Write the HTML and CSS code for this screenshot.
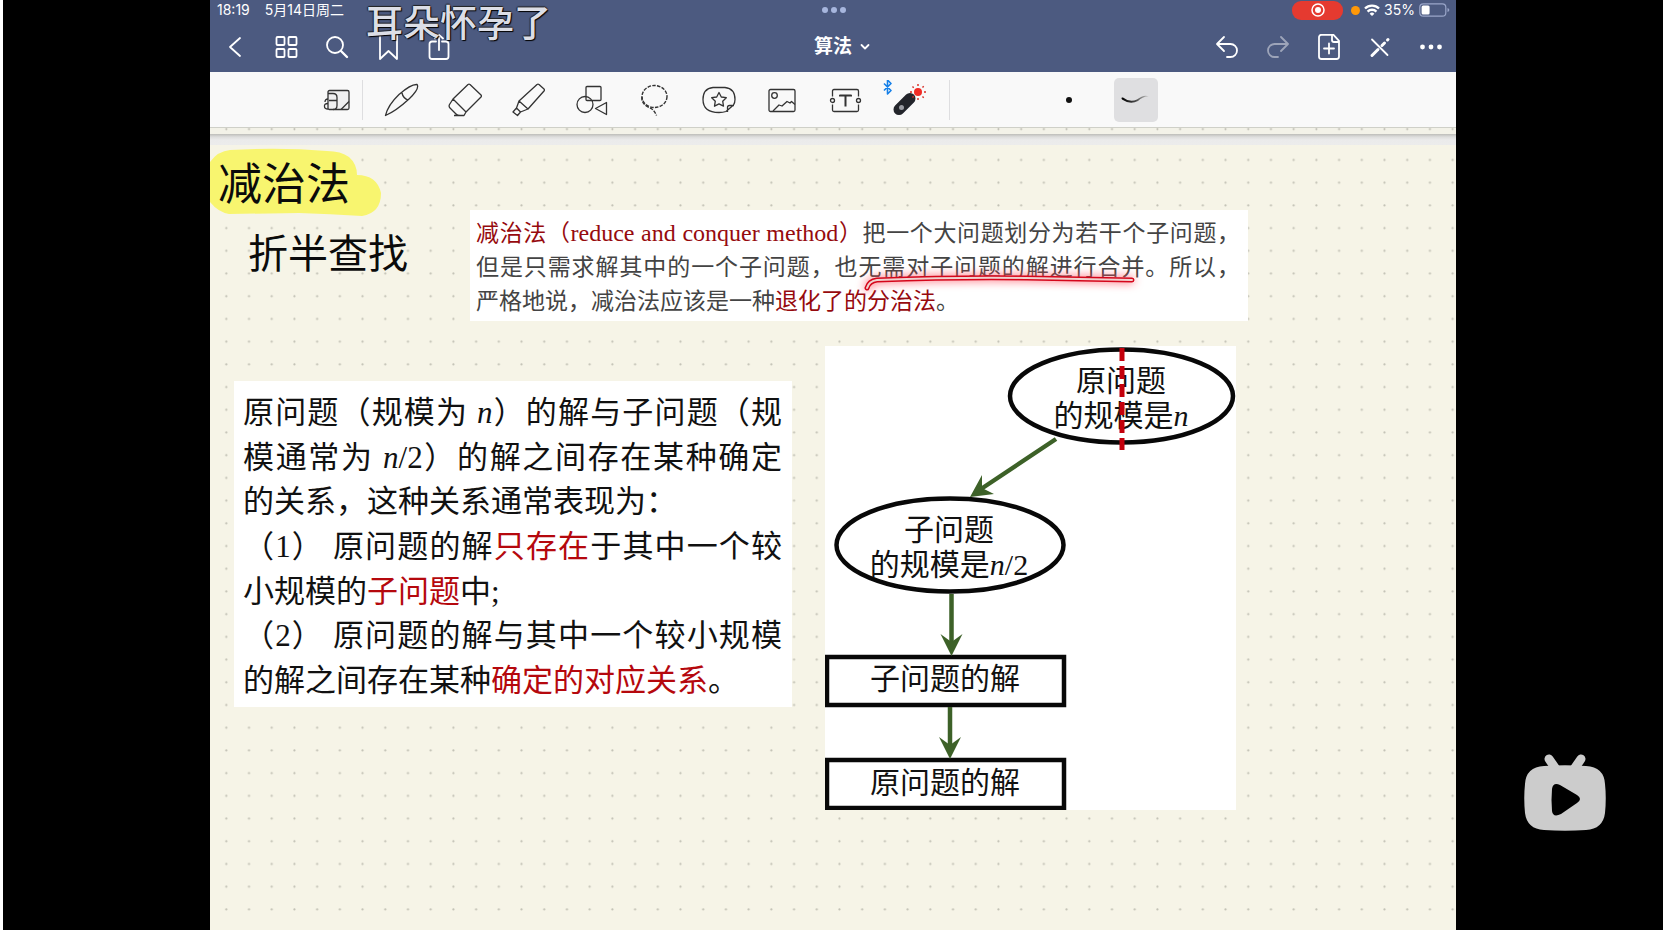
FILE: index.html
```html
<!DOCTYPE html>
<html lang="zh-CN">
<head>
<meta charset="utf-8">
<meta name="viewport" content="width=device-width, initial-scale=1">
<title>算法</title>
<link rel="stylesheet" href="styles.css">
</head>
<body>
<div class="stage">
  <main class="app">
    <header class="topbar">
      <div class="status">
        <div class="status-left"><span>18:19</span><span>5月14日周二</span></div>
        <div class="multitask"><i></i><i></i><i></i></div>
        <div class="status-right">
          <span class="record"><svg width="14" height="14" viewBox="0 0 14 14"><circle cx="7" cy="7" r="6" fill="none" stroke="#fff" stroke-width="1.5"/><circle cx="7" cy="7" r="3" fill="#fff"/></svg></span>
          <span class="mic"></span>
          <svg width="16" height="12" viewBox="0 0 16 12" fill="none" stroke="#fff" stroke-width="2.400"><path d="M1 4.500a10 10 0 0 1 14 0M3.600 7.600a6.200 6.200 0 0 1 8.800 0"/><path d="M8 12L5.600 9.800a3.400 3.400 0 0 1 4.800 0z" fill="#fff" stroke="none"/></svg>
          <span class="percent">35%</span>
          <svg width="31" height="14" viewBox="0 0 31 14"><rect x=".8" y=".8" width="26" height="12.4" rx="3.5" fill="none" stroke="#9aa6c9" stroke-width="1.2"/><rect x="2.6" y="2.6" width="8" height="8.8" rx="1.5" fill="#fff"/><path d="M28.5 5v4q1.8-.6 1.8-2t-1.8-2z" fill="#9aa6c9"/></svg>
        </div>
      </div>
      <nav class="nav">
        <div class="nav-group">
          <button class="nav-btn" aria-label="返回"><svg width="26" height="26" viewBox="0 0 26 26"><path d="M17 4L7 13l10 9"/></svg></button>
          <button class="nav-btn" aria-label="缩略图"><svg width="26" height="26" viewBox="0 0 26 26"><rect x="2.500" y="3" width="8" height="8" rx="1"/><rect x="14.500" y="3" width="8" height="8" rx="1"/><rect x="2.500" y="15" width="8" height="8" rx="1"/><rect x="14.500" y="15" width="8" height="8" rx="1"/></svg></button>
          <button class="nav-btn" aria-label="搜索"><svg width="26" height="26" viewBox="0 0 26 26"><circle cx="10" cy="11" r="8"/><path d="M16 17l6 6" stroke-width="2.4"/></svg></button>
          <button class="nav-btn" aria-label="书签"><svg width="26" height="26" viewBox="0 0 26 26"><path d="M4 0v25l8.500-8 8.500 8V0z"/></svg></button>
          <button class="nav-btn" aria-label="分享"><svg width="26" height="26" viewBox="0 0 26 26"><path d="M9 7.500H5a2.500 2.500 0 0 0-2.500 2.500v12.500A2.500 2.500 0 0 0 5 25h14a2.500 2.500 0 0 0 2.500-2.500V10A2.500 2.500 0 0 0 19 7.500h-4M12 16V1M8 4.500L12 .8l4 3.700"/></svg></button>
        </div>
        <button class="title">算法<svg width="10" height="8" viewBox="0 0 10 8"><path d="M1.500 2L5 5.500 8.500 2"/></svg></button>
        <div class="nav-group nav-end">
          <button class="nav-btn" aria-label="撤销"><svg width="26" height="26" viewBox="0 0 26 26"><path d="M10 3L3 10l7 7M3.500 10h13a6.500 6.500 0 0 1 0 13H13"/></svg></button>
          <button class="nav-btn faded" aria-label="重做"><svg width="26" height="26" viewBox="0 0 26 26"><path d="M16 3l7 7-7 7M22.500 10h-13a6.500 6.500 0 0 0 0 13H13"/></svg></button>
          <button class="nav-btn" aria-label="添加页面"><svg width="26" height="26" viewBox="0 0 26 26"><path d="M5.500 0.800h12l5.500 6V22.500a2.500 2.500 0 0 1-2.500 2.500h-15A2.500 2.500 0 0 1 3 22.500v-19A2.500 2.500 0 0 1 5.500.8zM16 1v5a2 2 0 0 0 2 2h5M13 9.500v10M8 14.500h10"/></svg></button>
          <button class="nav-btn" aria-label="只读模式"><svg width="26" height="26" viewBox="0 0 26 26"><path d="M5 5.500l15.500 15.500"/><path d="M5 21.500l6-6" stroke-width="3"/><path d="M15 11.500l2.500-2.500M20.500 6l.5-.5" stroke-width="3"/></svg></button>
          <button class="nav-btn" aria-label="更多"><svg width="26" height="26" viewBox="0 0 26 26"><g fill="#fff" stroke="none"><circle cx="4.500" cy="13" r="2.400"/><circle cx="13" cy="13" r="2.400"/><circle cx="21.500" cy="13" r="2.400"/></g></svg></button>
        </div>
      </nav>
      <p class="bullet">耳朵怀孕了</p>
    </header>

    <div class="toolbar">
      <button class="tool panel-toggle" aria-label="工具面板"><svg width="28" height="24" viewBox="0 0 28 24"><rect x="5" y="2.500" width="21" height="19" rx="1.500" fill="#efeff0"/><path d="M18 21.500l8-8M5 5.500h5q4 0 4 4v8q0 4-4 4M6 12.500h8M5 11q-3 0-3 3M5 15.500q-4 0-3.500 3 0 2.500 3.500 2.500"/></svg></button>
      <span class="divider"></span>
      <div class="tools">
        <button class="tool" aria-label="钢笔"><svg width="36" height="34" viewBox="0 0 36 34"><path d="M1.500 32.500Q4 22 15 11.500 27 1 33 1.500q3 4-8 14.500Q12 28 1.500 32.500zM18 10q1 5 6 7"/></svg></button>
        <button class="tool" aria-label="橡皮擦"><svg width="36" height="34" viewBox="0 0 36 34"><path d="M21 1.500q1-.8 2 0L34 12q.8 1 0 2L19 29 6 16zM6 16l-3.500 5.500q-1 2 .5 3.500l6 6q1.500 1.500 4 1.500h4L19 29M7 32.500h10"/></svg></button>
        <button class="tool" aria-label="荧光笔"><svg width="36" height="34" viewBox="0 0 36 34"><path d="M26 1.500q1-.8 2 0L33 6q.8 1 0 2L17 26 8 18zM8 18l-2.500 7 4 4L17 26M5.500 25L2 29l4.500 3.500 3-3.500"/></svg></button>
        <button class="tool" aria-label="形状"><svg width="36" height="34" viewBox="0 0 36 34"><rect x="12" y="3.500" width="15" height="14" rx="1"/><circle cx="11" cy="21.500" r="8"/><path d="M32.500 19.500v12l-11-6z"/></svg></button>
        <button class="tool" aria-label="套索"><svg width="36" height="34" viewBox="0 0 36 34"><g stroke-dasharray="3.500 1.300" stroke-width="1.400"><ellipse cx="17.500" cy="13.500" rx="12.500" ry="11"/><path d="M5 14q-1 6 6 10 6 2 8.500 8.500"/></g></svg></button>
        <button class="tool" aria-label="贴纸"><svg width="36" height="34" viewBox="0 0 36 34"><path d="M12 4.500h12q10 1 10 12 0 3-1.500 5.500L25 28.500q-3 1-7 1-16 0-16-13 0-11 10-12zM26.500 29v-4.500q0-2 2-2h4.500"/><path d="M18 9.500l2.300 4.500 5 .7-3.600 3.500.8 5-4.500-2.300-4.500 2.300.8-5-3.600-3.500 5-.7z"/></svg></button>
        <button class="tool" aria-label="图片"><svg width="36" height="34" viewBox="0 0 36 34"><rect x="5" y="6.500" width="26" height="22" rx="1.500"/><circle cx="10.500" cy="12.500" r="2.800"/><path d="M9 28l6-6 3 1 5-4.500 3 1.500 1.500-1.500 3.500 3"/></svg></button>
        <button class="tool" aria-label="文本"><svg width="36" height="34" viewBox="0 0 36 34"><path d="M4.500 13.500V8q0-1.500 1.500-1.500h23q1.500 0 1.500 1.500V13.500M4.500 21.500v5.500q0 1.500 1.500 1.500h23q1.500 0 1.500-1.500V21.500"/><circle cx="4.500" cy="17.500" r="2"/><circle cx="30.500" cy="17.500" r="2"/><path d="M12 13.500v-1h11v1M17.500 12.500v11" stroke-width="2"/></svg></button>
        <button class="tool laser" aria-label="激光笔"><svg width="56" height="40" viewBox="0 0 56 40"><path d="M3 3.500l7 7L6.500 14V0L10 3.500l-7 7" stroke="#1680e8" stroke-width="1.600"/><path d="M18 29.500L29 18.500" stroke="#23252b" stroke-width="11" stroke-linecap="round" class="body"/><path d="M22 33l11-11" stroke="#484b54" stroke-width="1"/><circle cx="20.500" cy="27.500" r="2.500" fill="#999ba2" stroke="none"/><circle cx="37" cy="12" r="4" fill="#f12c26" stroke="none"/><path d="M37 4v2M37 18v2M29 12h2M43 12h2M31.500 6.500l1.200 1.200M41.500 16.500l1.200 1.200M31.500 17.500l1.200-1.200M41.500 7.500l1.200-1.200" stroke="#d62b24" stroke-width="1.400"/></svg></button>
      </div>
      <span class="divider"></span>
      <div class="options">
        <button class="option" aria-label="圆点"><span class="point"></span></button>
        <button class="option selected" aria-label="笔迹"><svg width="30" height="14" viewBox="0 0 30 14"><defs><linearGradient id="ink"><stop offset="0" stop-color="#000"/><stop offset=".5" stop-color="#444"/><stop offset="1" stop-color="#ccc"/></linearGradient></defs><path d="M2 4.500q7 5.500 14 2Q23 1 28 3.500 22 3 17 8 9 12 1 6.500-.5 4 2 4.500z" fill="url(#ink)" stroke="none"/></svg></button>
      </div>
    </div>

    <svg class="page-end" aria-hidden="true"><defs><pattern id="dots-end" x="5" y="-10.300" width="22.710" height="22.710" patternUnits="userSpaceOnUse"><circle cx="11.300" cy="11.300" r="1" fill="#b3b2a8"/></pattern></defs><rect width="100%" height="100%" fill="url(#dots-end)"/></svg>
    <div class="page-gap"></div>

    <section class="canvas">
      <svg class="dots" aria-hidden="true"><defs><pattern id="dots" x="5" y="3.700" width="22.710" height="22.710" patternUnits="userSpaceOnUse"><circle cx="11.300" cy="11.300" r="1.100" fill="#c2c1b5"/></pattern></defs><rect width="100%" height="100%" fill="url(#dots)"/></svg>

      <svg class="highlight" width="180" height="80" viewBox="0 0 180 80" aria-hidden="true"><path d="M0 17Q8 6 20 5 70 2 117 6q14 0 22 6 8 7 8 18 20 0 24 18 0 20-19 23-32-2-63-3l-70 1Q8 67 0 57z" fill="#f8f56f"/></svg>
      <h1 class="ink ink-title">减治法</h1>
      <p class="ink ink-sub">折半查找</p>

      <article class="clip definition">
        <p class="line full"><span class="key">减治法（<span class="latin">reduce and conquer method</span>）</span>把一个大问题划分为若干个子问题，</p>
        <p class="line full">但是只需求解其中的一个子问题，也无需对子问题的解进行合并。所以，</p>
        <p class="line">严格地说，减治法应该是一种<span class="key">退化了的分治法</span>。</p>
        <svg class="laser-line" width="290" height="36" viewBox="0 0 290 36" aria-hidden="true" fill="none" stroke-linecap="round" stroke-linejoin="round"><path d="M12 22q2-7 10-8 80-3 150-2 60 1 105 2" stroke="#d5061b" stroke-width="5"/><path d="M12 22q2-7 10-8 80-3 150-2 60 1 105 2" stroke="#f0d2cf" stroke-width="2"/></svg>
      </article>

      <article class="clip relation">
        <p class="line full">原问题（规模为 <em>n</em>）的解与子问题（规</p>
        <p class="line full">模通常为 <em>n</em>/2）的解之间存在某种确定</p>
        <p class="line">的关系，这种关系通常表现为：</p>
        <p class="line full">（1） 原问题的解<span class="key">只存在</span>于其中一个较</p>
        <p class="line">小规模的<span class="key">子问题</span>中;</p>
        <p class="line full">（2） 原问题的解与其中一个较小规模</p>
        <p class="line">的解之间存在某种<span class="key">确定的对应关系</span>。</p>
      </article>

      <figure class="clip diagram">
        <svg width="411" height="464" viewBox="0 0 411 464" role="img">
          <g fill="none" stroke="#080808" stroke-width="4.500">
            <ellipse cx="296.500" cy="50" rx="111.500" ry="46.500"/>
            <ellipse cx="125" cy="199" rx="113.500" ry="46.500"/>
            <rect x="2" y="311" width="237" height="48"/>
            <rect x="2" y="414" width="237" height="48"/>
          </g>
          <g stroke="#3d6128" stroke-width="4.500">
            <path d="M231 93L153 145M126.500 248v52M125 361v42"/>
          </g>
          <g fill="#3d6128">
            <path d="M145 151l12-22 0 13 12 6z"/>
            <path d="M126.500 310l-11-22 11 8 11-8z"/>
            <path d="M125 413l-11-22 11 8 11-8z"/>
          </g>
          <g class="diagram-text">
            <text x="296" y="45">原问题</text>
            <text x="296" y="80">的规模是<tspan class="var">n</tspan></text>
            <text x="124" y="194">子问题</text>
            <text x="124" y="229">的规模是<tspan class="var">n</tspan>/2</text>
            <text x="120" y="343">子问题的解</text>
            <text x="120" y="447">原问题的解</text>
          </g>
          <path d="M297 2v102" stroke="#c4000c" stroke-width="5" stroke-dasharray="13 5"/>
        </svg>
      </figure>
    </section>
  </main>

  <aside class="side">
    <button class="play" aria-label="播放"><svg width="82" height="78" viewBox="0 0 82 78"><path d="M25 5l9 13M57 5l-9 13" stroke="#ccc" stroke-width="9" stroke-linecap="round"/><path d="M20 12q21-1.500 42 0 18 1 19 18 1.500 14 0 29-2 16-19 17-21 1.500-42 0Q3 75 1 59q-1.500-15 0-29 1-17 19-18z" fill="#ccc"/><path d="M28 35q1-7 8-4l17 10q6 4 0 8L37 60q-8 4-9-3-1-11 0-22z" fill="#000"/></svg></button>
  </aside>
</div>
</body>
</html>
```
FILE: styles.css
```css
* { box-sizing: border-box; }
body, p, h1, figure { margin: 0; }
body {
  background: #000;
  font-family: Inter, "Noto Sans CJK SC", sans-serif;
}
button {
  border: 0;
  padding: 0;
  background: none;
  color: inherit;
  font: inherit;
}
svg { display: block; }

.stage {
  display: grid;
  grid-template-columns: 207px minmax(0, 1fr) 207px;
  min-height: 100vh;
  border-left: 3px solid #fff;
}
.stage::before { content: ""; }
.app {
  display: flex;
  flex-direction: column;
  overflow: hidden;
  background: #f6f4e7;
}

.topbar {
  position: relative;
  background: #4c5a80;
  color: #fff;
}
.status {
  display: grid;
  grid-template-columns: 1fr auto 1fr;
  align-items: center;
  height: 20px;
  padding: 0 6px 0 7px;
  font-size: 14px;
  line-height: 20px;
}
.status-left { display: flex; gap: 15px; }
.multitask { display: flex; gap: 3px; }
.multitask i {
  width: 6px;
  height: 6px;
  border-radius: 50%;
  background: #a7b6de;
}
.status-right {
  display: flex;
  align-items: center;
  justify-content: flex-end;
  gap: 4px;
}
.record {
  display: grid;
  place-items: center;
  width: 51px;
  height: 19px;
  margin-right: 4px;
  border-radius: 9px;
  background: #e53a30;
}
.mic {
  width: 9px;
  height: 9px;
  border-radius: 50%;
  background: #ff9808;
}

.nav {
  display: grid;
  grid-template-columns: 1fr auto 1fr;
  align-items: center;
  height: 52px;
  padding-top: 2px;
}
.nav-group { display: flex; }
.nav-end { justify-content: flex-end; }
.nav-btn {
  display: grid;
  place-items: center;
  width: 51px;
  height: 50px;
}
.nav svg {
  fill: none;
  stroke: #fff;
  stroke-width: 1.8;
  stroke-linecap: round;
  stroke-linejoin: round;
}
.faded { opacity: .45; }
.title {
  display: flex;
  align-items: center;
  gap: 8px;
  padding-left: 18px;
  font-size: 19px;
  font-weight: 700;
  line-height: 30px;
}
.bullet {
  position: absolute;
  left: 156px;
  top: 0;
  color: #dcdee6;
  font-size: 37px;
  font-weight: 500;
  line-height: 48px;
  text-shadow: 1px 1px 1px #000, -1px 0 1px #222, 0 -1px 1px #222;
}

.toolbar {
  display: flex;
  align-items: center;
  height: 56px;
  padding: 1px 0 0 101px;
  border-bottom: 1px solid #cfd0c8;
  background: #f9f9f9;
}
.tool {
  display: grid;
  place-items: center;
  height: 54px;
}
.tool svg {
  fill: none;
  stroke: #333;
  stroke-width: 1.3;
  stroke-linejoin: round;
}
.panel-toggle { width: 51px; }
.divider {
  width: 1px;
  height: 40px;
  background: #dedee0;
}
.tools {
  display: grid;
  grid-template-columns: repeat(9, 1fr);
  flex: 0 1 571px;
  margin: 0 8px 0 7px;
}
.options {
  display: flex;
  gap: 23px;
  margin-left: 97px;
}
.option {
  display: grid;
  place-items: center;
  width: 44px;
  height: 44px;
  border-radius: 5px;
}
.selected { background: #dfdfe1; }
.point {
  width: 6px;
  height: 6px;
  border-radius: 50%;
  background: #111;
}

.page-end {
  width: 100%;
  height: 6px;
  background: #f3f2e8;
}
.page-gap {
  height: 11px;
  background: linear-gradient(#bdbdb9, #dededd 3px, #ebebeb 6px, #ececec);
}
.canvas {
  position: relative;
  flex: 1;
  min-height: 785px;
}
.dots {
  position: absolute;
  inset: 0;
  width: 100%;
  height: 100%;
}

/* Items pinned to the note canvas */
.highlight {
  position: absolute;
  left: 0;
  top: 0;
}
.ink {
  position: absolute;
  color: #0b0b0b;
  font-family: "Noto Sans CJK SC", sans-serif;
  font-weight: 400;
  line-height: 52px;
  white-space: nowrap;
}
.ink-title {
  left: 8px;
  top: 10px;
  font-size: 44px;
}
.ink-sub {
  left: 38px;
  top: 80px;
  font-size: 40px;
}
.clip {
  position: absolute;
  background: #fff;
  font-family: "Liberation Serif", "Noto Sans CJK SC", serif;
}
.line { white-space: nowrap; }
.full { text-align-last: justify; }
.key { color: #960a0e; }
.latin { font-size: 24px; }

.definition {
  left: 260px;
  top: 65px;
  width: 778px;
  padding: 6px 8px 2px 6px;
  color: #444;
  font-size: 23px;
  line-height: 34px;
}
.laser-line {
  position: absolute;
  left: 385px;
  top: 56px;
  overflow: visible;
  filter: drop-shadow(0 0 5px #ff4a5a);
}
.relation {
  display: flex;
  flex-direction: column;
  justify-content: space-between;
  left: 24px;
  top: 236px;
  width: 558px;
  min-height: 326px;
  padding: 10px 10px 4px 9px;
  color: #111;
  font-size: 31px;
  line-height: 44px;
}
.relation .key { color: #b5080d; }
.diagram {
  left: 615px;
  top: 201px;
}
.diagram-text {
  fill: #111;
  font-size: 30px;
  text-anchor: middle;
}
.var { font-style: italic; }

.side {
  display: flex;
  align-items: flex-end;
  justify-content: flex-end;
  padding: 0 57px 98px 0;
}
```
